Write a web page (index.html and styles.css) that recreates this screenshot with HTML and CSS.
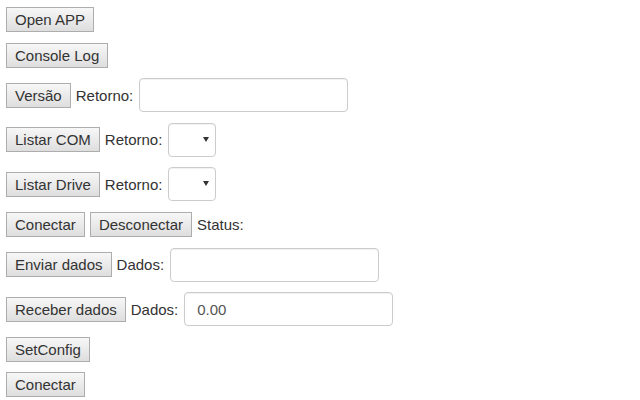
FILE: index.html
```html
<!DOCTYPE html>
<html>
<head>
<meta charset="utf-8">
<link rel="stylesheet" href="styles.css">
</head>
<body>
<div class="page">
  <div class="row r-btn"><button class="btn">Open APP</button></div>
  <div class="row r-btn"><button class="btn">Console Log</button></div>
  <div class="row r-field">
    <button class="btn">Versão</button>
    <span class="label">Retorno:</span>
    <input class="field" type="text">
  </div>
  <div class="row r-field">
    <button class="btn">Listar COM</button>
    <span class="label">Retorno:</span>
    <span class="select-wrap"><select class="select"></select></span>
  </div>
  <div class="row r-field">
    <button class="btn">Listar Drive</button>
    <span class="label">Retorno:</span>
    <span class="select-wrap"><select class="select"></select></span>
  </div>
  <div class="row r-btn">
    <button class="btn">Conectar</button>
    <button class="btn">Desconectar</button>
    <span class="label">Status:</span>
  </div>
  <div class="row r-field">
    <button class="btn">Enviar dados</button>
    <span class="label">Dados:</span>
    <input class="field" type="text">
  </div>
  <div class="row r-field">
    <button class="btn">Receber dados</button>
    <span class="label">Dados:</span>
    <input class="field" type="text" value="0.00">
  </div>
  <div class="row r-btn"><button class="btn">SetConfig</button></div>
  <div class="row r-btn"><button class="btn">Conectar</button></div>
</div>
</body>
</html>
```

FILE: styles.css
```css
html, body {
  margin: 0;
  padding: 0;
  background: #ffffff;
}
body {
  font-family: "Liberation Sans", Arial, sans-serif;
  font-size: 15px;
  color: #333333;
}
.page {
  display: flex;
  flex-direction: column;
  gap: 10.6px;
  padding: 7px 0 0 6px;
}
.row {
  display: flex;
  align-items: center;
  gap: 5px;
}
.r-btn { height: 25px; }
.r-field { height: 34px; }
.btn {
  height: 25px;
  box-sizing: border-box;
  margin: 0;
  padding: 0 8px;
  font-family: "Liberation Sans", Arial, sans-serif;
  font-size: 15px;
  color: #333333;
  background: linear-gradient(#f7f7f7, #dedede);
  border: 1px solid #adadad;
  border-radius: 0;
  line-height: 23px;
}
.label {
  color: #333333;
  margin-right: 1px;
}
.field {
  box-sizing: border-box;
  height: 34px;
  width: 209px;
  margin: 0;
  padding: 6px 12px;
  font-family: "Liberation Sans", Arial, sans-serif;
  font-size: 15px;
  color: #555555;
  border: 1px solid #cccccc;
  border-radius: 4px;
  box-shadow: inset 0 1px 1px rgba(0,0,0,0.06);
  outline: none;
}
.select-wrap {
  position: relative;
  display: inline-block;
  height: 34px;
}
.select {
  appearance: none;
  -webkit-appearance: none;
  box-sizing: border-box;
  width: 48px;
  height: 34px;
  margin: 0;
  background: #ffffff;
  border: 1px solid #cccccc;
  border-radius: 4px;
  box-shadow: inset 0 1px 1px rgba(0,0,0,0.06);
}
.select-wrap::after {
  content: "";
  position: absolute;
  left: 35px;
  top: 14px;
  border-left: 3px solid transparent;
  border-right: 3px solid transparent;
  border-top: 5px solid #333333;
}
```
